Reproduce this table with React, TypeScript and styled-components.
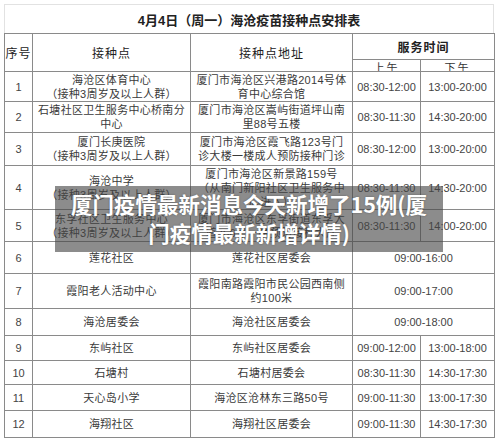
import styled, { createGlobalStyle } from "styled-components";

const GlobalStyle = createGlobalStyle`
  body {
    margin: 0;
    background: #fff;
    font-family: "Liberation Sans", "Noto Sans CJK SC", sans-serif;
    color: #333;
  }
`;

type Row = {
  no: number;
  site: string[];
  addr: string[];
  am: string;
  pm?: string;
  h: number;
};

const rows: Row[] = [
  { no: 1, site: ["海沧区体育中心", "（接种3周岁及以上人群）"], addr: ["厦门市海沧区兴港路2014号体", "育中心综合馆"], am: "08:30-12:00", pm: "13:00-20:00", h: 30 },
  { no: 2, site: ["石塘社区卫生服务中心桥南分", "中心"], addr: ["厦门市海沧区嵩屿街道坪山南", "里88号五楼"], am: "08:30-11:30", pm: "14:30-20:00", h: 31 },
  { no: 3, site: ["厦门长庚医院", "（接种3周岁及以上人群）"], addr: ["厦门市海沧区霞飞路123号门", "诊大楼一楼成人预防接种门诊"], am: "08:30-12:00", pm: "13:00-20:00", h: 33 },
  { no: 4, site: ["海沧中学", "（接种3周岁及以上人群）"], addr: ["厦门市海沧区新景路159号", "（从南门新阳社区卫生服务中", "心进入）"], am: "08:30-11:30", pm: "14:30-20:00", h: 44 },
  { no: 5, site: ["东孚社区卫生服务中心", "（接种3周岁及以上人群）"], addr: ["厦门市海沧区东孚街道东孚大", "道366号一楼预防接种大厅"], am: "08:30-11:30", pm: "14:00-20:00", h: 32 },
  { no: 6, site: ["莲花社区"], addr: ["莲花社区居委会"], am: "09:00-16:00", h: 32 },
  { no: 7, site: ["霞阳老人活动中心"], addr: ["霞阳南路霞阳市民公园西南侧", "约100米"], am: "09:00-17:00", h: 35 },
  { no: 8, site: ["海沧居委会"], addr: ["海沧社区居委会"], am: "09:00-18:00", h: 27 },
  { no: 9, site: ["东屿社区"], addr: ["东屿社区居委会"], am: "09:00-12:00", pm: "13:00-18:00", h: 25 },
  { no: 10, site: ["石塘村"], addr: ["石塘村居委会"], am: "08:30-11:30", pm: "14:30-17:30", h: 24 },
  { no: 11, site: ["天心岛小学"], addr: ["海沧区沧林东三路50号"], am: "09:00-11:30", pm: "13:00-17:30", h: 26 },
  { no: 12, site: ["海翔社区"], addr: ["海翔社区居委会"], am: "09:00-11:30", pm: "14:30-17:30", h: 27 },
];

const App = () => {
  return (
    <Page>
      <GlobalStyle />
      <Title>4月4日（周一）海沧疫苗接种点安排表</Title>
      <Table>
        <colgroup>
          <col style={{ width: 28 }} />
          <col style={{ width: 158 }} />
          <col style={{ width: 162 }} />
          <col style={{ width: 68 }} />
          <col style={{ width: 74 }} />
        </colgroup>
        <thead>
          <Tr $h={26}>
            <Th rowSpan={2}>序号</Th>
            <Th rowSpan={2}>接种点</Th>
            <Th rowSpan={2}>接种点地址</Th>
            <Th colSpan={2} $bold>服务时间</Th>
          </Tr>
          <Tr $h={12}>
            <SubTh>
              <Clip>上午</Clip>
            </SubTh>
            <SubTh>
              <Clip>下午</Clip>
            </SubTh>
          </Tr>
        </thead>
        <tbody>
          {rows.map((r) => (
            <Tr key={r.no} $h={r.h}>
              <NoCell>{r.no}</NoCell>
              <TextCell>
                {r.site.map((l) => (
                  <Line key={l}>{l}</Line>
                ))}
              </TextCell>
              <TextCell>
                {r.addr.map((l) => (
                  <Line key={l}>{l}</Line>
                ))}
              </TextCell>
              {r.pm ? (
                <>
                  <TimeCell>{r.am}</TimeCell>
                  <TimeCell>{r.pm}</TimeCell>
                </>
              ) : (
                <TimeCell colSpan={2}>{r.am}</TimeCell>
              )}
            </Tr>
          ))}
        </tbody>
      </Table>
      <Banner>
        厦门疫情最新消息今天新增了15例(厦
        <br />
        门疫情最新新增详情)
      </Banner>
    </Page>
  );
};

export default App;

const Page = styled.div`
  position: relative;
  width: 490px;
  height: 432px;
  padding: 4px 6px 4px 4px;
`;

const Title = styled.div`
  height: 27px;
  border: 1px solid #e2e2e2;
  border-bottom: none;
  display: flex;
  align-items: center;
  justify-content: center;
  font-size: 13px;
  font-weight: 700;
  color: #222;
  padding-top: 1px;
`;

const Table = styled.table`
  width: 490px;
  table-layout: fixed;
  border-collapse: collapse;
  font-size: 11px;
`;

const Tr = styled.tr<{ $h: number }>`
  height: ${(p) => p.$h}px;
`;

const Th = styled.th<{ $bold?: boolean }>`
  border: 1px solid #8a8a8a;
  padding: 0;
  font-size: 12px;
  font-weight: ${(p) => (p.$bold ? 700 : 400)};
  letter-spacing: 1px;
  color: #222;
  text-align: center;
  vertical-align: middle;
`;

const SubTh = styled.th`
  border: 1px solid #8a8a8a;
  padding: 0;
  height: 11px;
  font-weight: 400;
  font-size: 11px;
  color: #333;
`;

const Clip = styled.div`
  height: 11px;
  overflow: hidden;
  line-height: 1;
  padding-top: 3px;
  box-sizing: border-box;
  letter-spacing: 2px;
`;

const NoCell = styled.td`
  border: 1px solid #8a8a8a;
  text-align: center;
  padding: 0;
  font-size: 11px;
  color: #444;
`;

const TextCell = styled.td`
  border: 1px solid #8a8a8a;
  text-align: center;
  padding: 0 3px;
  font-size: 11px;
  line-height: 14px;
  letter-spacing: 0.3px;
  color: #3a3a3a;
  white-space: nowrap;
  overflow: hidden;
`;

const Line = styled.div``;

const TimeCell = styled.td`
  border: 1px solid #8a8a8a;
  text-align: center;
  padding: 0;
  font-size: 11px;
  color: #444;
  white-space: nowrap;
`;

const Banner = styled.div`
  position: absolute;
  left: 55px;
  top: 186px;
  width: 388px;
  height: 66px;
  box-sizing: border-box;
  padding-top: 3px;
  background: rgba(70, 70, 70, 0.62);
  color: #fff;
  font-size: 21.5px;
  font-weight: 700;
  line-height: 29px;
  text-align: center;
  text-shadow: 0 0 2px rgba(0, 0, 0, 0.35);
  font-family: "Noto Sans CJK SC", sans-serif;
`;
